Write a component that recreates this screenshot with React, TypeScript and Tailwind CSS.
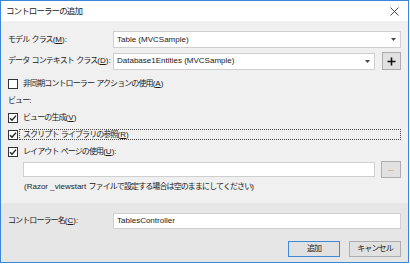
import React from 'react';

const FONT = { fontFamily: '"Liberation Sans", "Noto Sans CJK JP", sans-serif' };

// Japanese runs are set a bit tighter, like Meiryo UI
const J: React.FC<{ children: React.ReactNode }> = ({ children }) => (
  <span className="tracking-[-0.9px]">{children}</span>
);

const Check: React.FC<{ checked?: boolean }> = ({ checked }) => (
  <span className="w-[10px] h-[10px] border border-[#333333] bg-white flex items-center justify-center shrink-0">
    {checked && (
      <svg width="8" height="8" viewBox="0 0 8 8">
        <path d="M1 4.2 L3 6.2 L7 1.6" fill="none" stroke="#222222" strokeWidth="1.4" />
      </svg>
    )}
  </span>
);

const Arrow = () => (
  <svg width="5" height="3" viewBox="0 0 5 3" className="shrink-0">
    <path d="M0 0 H5 L2.5 3 Z" fill="#444444" />
  </svg>
);

const SelectBox: React.FC<{ value: string; className?: string }> = ({ value, className }) => (
  <div className={`h-[17px] bg-white border border-[#cfcfcf] flex items-center pl-[3px] pr-[4px] ${className ?? ''}`}>
    <span className="flex-1 truncate">{value}</span>
    <Arrow />
  </div>
);

export default function App() {
  return (
    <div className="w-[410px] h-[264px] bg-white text-[8px] text-[#1a1a1a] leading-none whitespace-nowrap" style={FONT}>
      <div className="w-[409px] h-[263px] border border-[#3b86d6] flex flex-col">
        {/* title bar */}
        <div className="h-[20px] bg-white flex items-center pl-[5px] pr-[9px]">
          <span className="flex-1 text-[8.5px]"><J>コントローラーの追加</J></span>
          <svg width="9" height="9" viewBox="0 0 9 9">
            <path d="M0.5 0.5 L8.5 8.5 M8.5 0.5 L0.5 8.5" stroke="#333333" strokeWidth="0.9" />
          </svg>
        </div>

        {/* upper section */}
        <div className="h-[182px] bg-[#f0f0f0] pl-[7px] pr-[7px] pt-[10px] flex flex-col">
          <div className="flex items-center">
            <span className="w-[105px] shrink-0"><J>モデル</J> <J>クラス</J>(<u>M</u>):</span>
            <SelectBox value="Table (MVCSample)" className="flex-1" />
          </div>
          <div className="flex items-center mt-[4px] h-[18px]">
            <span className="w-[105px] shrink-0"><J>データ</J> <J>コンテキスト</J> <J>クラス</J>(<u>D</u>):</span>
            <SelectBox value="Database1Entities (MVCSample)" className="w-[262px]" />
            <button className="ml-[7px] w-[19px] h-[18px] bg-[#e1e1e1] border border-[#adadad] flex items-center justify-center">
              <svg width="9" height="9" viewBox="0 0 9 9">
                <path d="M4.5 0.5 V8.5 M0.5 4.5 H8.5" stroke="#111111" strokeWidth="1.6" />
              </svg>
            </button>
          </div>

          <div className="mt-[5px] h-[17px] flex items-center gap-[5px]">
            <Check />
            <span><J>非同期コントローラー</J> <J>アクションの使用</J>(<u>A</u>)</span>
          </div>
          <div className="h-[17px] flex items-center"><J>ビュー:</J></div>
          <div className="h-[17px] flex items-center gap-[5px]">
            <Check checked />
            <span><J>ビューの生成</J>(<u>V</u>)</span>
          </div>
          <div className="h-[17px] flex items-center gap-[1px]">
            <Check checked />
            <span className="flex-1 h-[11px] border border-dotted border-[#444444] flex items-center pl-[3px]">
              <J>スクリプト</J>&nbsp;<J>ライブラリの参照</J>(<u>R</u>)
            </span>
          </div>
          <div className="h-[17px] flex items-center gap-[5px]">
            <Check checked />
            <span><J>レイアウト</J> <J>ページの使用</J>(<u>U</u>):</span>
          </div>
          <div className="pl-[15px] flex items-center mt-[1px]">
            <div className="flex-1 h-[15px] bg-white border border-[#cfcfcf]" />
            <button className="ml-[6px] w-[20px] h-[17px] bg-[#e1e1e1] border border-[#adadad] flex items-end justify-center pb-[5px] text-[7px] text-[#666666]">
              ...
            </button>
          </div>
          <div className="pl-[16px] mt-[3px] h-[12px] flex items-center">
            (Razor _viewstart&nbsp;<J>ファイルで設定する場合は空のままにしてください</J>)
          </div>
        </div>

        {/* lower section */}
        <div className="flex-1 bg-[#e6e6e6] pl-[7px] pr-[7px] pt-[10px] flex flex-col">
          <div className="flex items-center">
            <span className="w-[105px] shrink-0"><J>コントローラー名</J>(<u>C</u>):</span>
            <div className="flex-1 h-[16px] bg-white border border-[#cfcfcf] flex items-center pl-[3px]">
              TablesController
            </div>
          </div>
          <div className="mt-[12px] flex justify-end gap-[9px]">
            <button className="w-[52px] h-[16px] bg-[#e1e1e1] border border-[#3c8bd9] flex items-center justify-center">
              <J>追加</J>
            </button>
            <button className="w-[52px] h-[16px] bg-[#e1e1e1] border border-[#adadad] flex items-center justify-center">
              <J>キャンセル</J>
            </button>
          </div>
        </div>
      </div>
    </div>
  );
}
